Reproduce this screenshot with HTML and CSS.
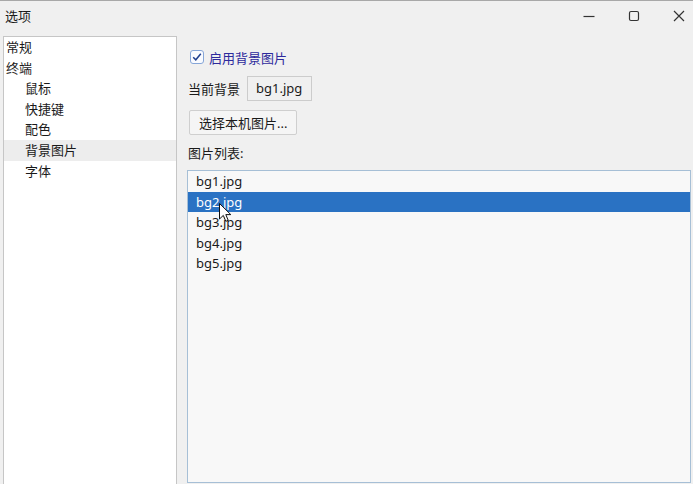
FILE: index.html
```html
<!DOCTYPE html>
<html lang="zh-CN">
<head>
<meta charset="utf-8">
<title>选项</title>
<link rel="stylesheet" href="styles.css">
</head>
<body>
<div class="window">
  <div class="titlebar">
    <span class="title">选项</span>
    <div class="controls">
      <span class="ctrl"><svg width="12" height="12" viewBox="0 0 12 12"><path d="M0.5 6.5H11.5" stroke="#333" stroke-width="1.2"/></svg></span>
      <span class="ctrl"><svg width="12" height="12" viewBox="0 0 12 12"><rect x="1.5" y="1.5" width="9" height="9" rx="1.5" fill="none" stroke="#333" stroke-width="1.2"/></svg></span>
      <span class="ctrl"><svg width="12" height="12" viewBox="0 0 12 12"><path d="M1 1L11 11M11 1L1 11" stroke="#333" stroke-width="1.2"/></svg></span>
    </div>
  </div>
  <div class="main">
    <ul class="tree">
      <li class="node">常规</li>
      <li class="node">终端</li>
      <li class="node child">鼠标</li>
      <li class="node child">快捷键</li>
      <li class="node child">配色</li>
      <li class="node child selected">背景图片</li>
      <li class="node child">字体</li>
    </ul>
    <div class="pane">
      <label class="check-row">
        <span class="checkbox"><svg width="14" height="14" viewBox="0 0 14 14"><path d="M3.2 7.2L5.8 9.8L10.8 3.8" fill="none" stroke="#1f3f8f" stroke-width="1.5"/></svg></span>
        <span class="check-label">启用背景图片</span>
      </label>
      <div class="current-row">
        <span class="label">当前背景</span>
        <span class="value-box">bg1.jpg</span>
      </div>
      <button class="btn">选择本机图片...</button>
      <div class="list-label">图片列表:</div>
      <ul class="listbox">
        <li class="item">bg1.jpg</li>
        <li class="item active">bg2.jpg</li>
        <li class="item">bg3.jpg</li>
        <li class="item">bg4.jpg</li>
        <li class="item">bg5.jpg</li>
      </ul>
    </div>
  </div>
  <svg class="cursor" width="13" height="20" viewBox="0 0 13 20"><path d="M0.5 0.5V16L4.3 12.4L6.8 18.3L9.2 17.3L6.8 11.6H11.8Z" fill="#fff" stroke="#111" stroke-width="1"/></svg>
</div>
</body>
</html>
```
FILE: styles.css
```css
* { box-sizing: border-box; }
html, body { margin: 0; padding: 0; }
body {
  width: 693px;
  height: 484px;
  overflow: hidden;
  background: #f0f0f0;
  font-family: "Noto Sans", "Noto Sans CJK SC", sans-serif;
  font-size: 13px;
  color: #1a1a1a;
}
.window {
  position: relative;
  height: 484px;
  overflow: hidden;
  border-top: 1px solid #a8a8a8;
}
.titlebar {
  height: 35px;
  display: flex;
  align-items: center;
  justify-content: space-between;
  padding-left: 5px;
}
.title { line-height: 20px; margin-top: -6px; }
.controls { display: flex; align-items: center; margin-top: -6px; margin-right: -8px; }
.ctrl {
  width: 45px;
  height: 28px;
  display: flex;
  align-items: center;
  justify-content: center;
}
.main {
  display: flex;
  padding-left: 3px;
  gap: 10px;
}
.tree {
  list-style: none;
  margin: 0;
  padding: 0;
  width: 174px;
  height: 470px;
  background: #fff;
  border: 1px solid #c6c6c6;
  flex: none;
}
.node {
  height: 20.6px;
  line-height: 20.6px;
  padding-left: 2px;
  white-space: nowrap;
}
.node.child { padding-left: 21px; }
.node.selected { background: #ededed; }
.pane {
  flex: 1;
  padding-top: 12px;
  padding-right: 2px;
  display: flex;
  flex-direction: column;
  align-items: flex-start;
}
.check-row {
  height: 18px;
  display: flex;
  align-items: center;
  padding-left: 3px;
  gap: 5px;
}
.checkbox {
  width: 14px;
  height: 14px;
  border: 1px solid #86a6d8;
  border-radius: 3px;
  background: #f9fbff;
  display: flex;
}
.checkbox svg { margin: -1px; }
.check-label { color: #2d2a9c; }
.current-row {
  margin-top: 10px;
  display: flex;
  align-items: center;
  gap: 7px;
  padding-left: 1px;
}
.value-box {
  height: 25px;
  line-height: 23px;
  padding: 0 9px 0 8px;
  border: 1px solid #cccccc;
  background: #f0f0f0;
}
.btn {
  margin-top: 9px;
  margin-left: 2px;
  height: 25px;
  padding: 0 9px;
  font: inherit;
  color: inherit;
  background: #f5f5f5;
  border: 1px solid #cfcfcf;
  border-radius: 2px;
}
.list-label {
  margin-top: 9px;
  line-height: 18px;
  padding-left: 1px;
}
.listbox {
  list-style: none;
  margin: 8px 0 0 0;
  padding: 0;
  align-self: stretch;
  height: 313px;
  background: #f8f8f8;
  border: 1px solid #a6bfd6;
}
.item {
  height: 20.5px;
  line-height: 20.5px;
  padding-left: 8px;
}
.item.active {
  background: #2a72c3;
  color: #fff;
}
.cursor {
  position: absolute;
  left: 219px;
  top: 202px;
}
```
